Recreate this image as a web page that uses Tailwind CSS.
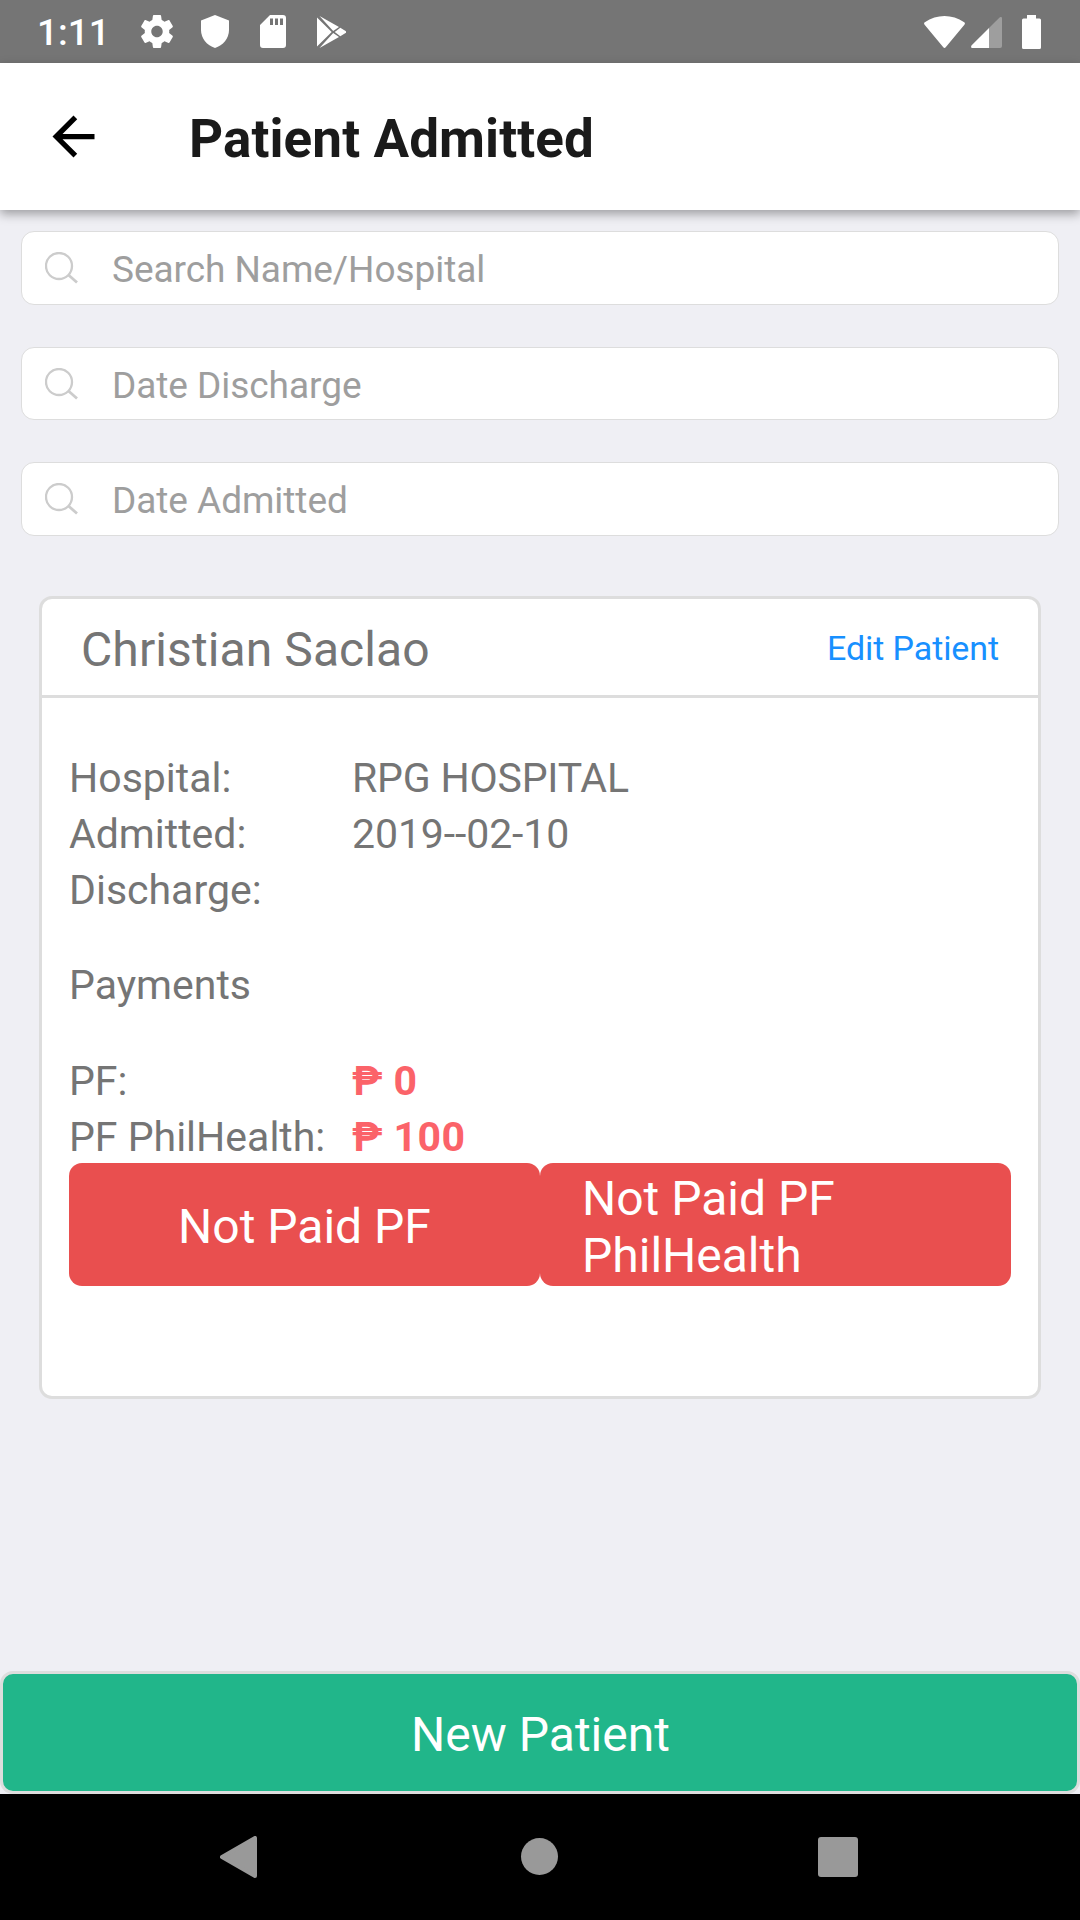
<!DOCTYPE html>
<html lang="en">
<head>
<meta charset="utf-8">
<title>Patient Admitted</title>
<script src="https://cdn.jsdelivr.net/npm/@tailwindcss/browser@4"></script>
</head>
<body class="font-[Roboto,sans-serif]">
<div class="flex h-[1920px] w-[1080px] flex-col overflow-hidden bg-[#efeff4] text-[#757575]">

  <!-- Status bar -->
  <div class="flex h-[63px] shrink-0 items-center justify-between bg-[#757575] pr-[39px] pl-[37px] text-white">
    <div class="flex items-center">
      <span class="w-[104px] pt-[3px] text-[37px] leading-[60px] font-medium">1:11</span>
      <svg class="mr-7 h-[33px] w-8" viewBox="2.2 2 19.6 20" preserveAspectRatio="none" fill="currentColor"><path d="M19.43 12.98c.04-.32.07-.64.07-.98s-.03-.66-.07-.98l2.11-1.65c.19-.15.24-.42.12-.64l-2-3.46c-.12-.22-.39-.3-.61-.22l-2.49 1c-.52-.4-1.08-.73-1.69-.98l-.38-2.65C14.46 2.18 14.25 2 14 2h-4c-.25 0-.46.18-.49.42l-.38 2.65c-.61.25-1.17.59-1.69.98l-2.49-1c-.23-.09-.49 0-.61.22l-2 3.46c-.13.22-.07.49.12.64l2.11 1.65c-.04.32-.07.65-.07.98s.03.66.07.98l-2.11 1.65c-.19.15-.24.42-.12.64l2 3.46c.12.22.39.3.61.22l2.49-1c.52.4 1.08.73 1.69.98l.38 2.65c.03.24.24.42.49.42h4c.25 0 .46-.18.49-.42l.38-2.65c.61-.25 1.17-.59 1.69-.98l2.49 1c.23.09.49 0 .61-.22l2-3.46c.12-.22.07-.49-.12-.64l-2.11-1.65zM12 15.5c-1.93 0-3.5-1.57-3.5-3.5s1.57-3.5 3.5-3.5 3.5 1.57 3.5 3.5-1.57 3.5-3.5 3.5z"/></svg>
      <svg class="mr-[31px] h-[33px] w-7" viewBox="0 0 28 33" fill="currentColor"><path d="M14 0 28 5.5V15c0 8.500-6 15.500-14 18C6 30.500 0 23.500 0 15V5.500z"/></svg>
      <svg class="mr-[31px] h-[33px] w-[26px]" viewBox="0 0 26 33" fill="currentColor"><path fill-rule="evenodd" d="M10 0h13a3 3 0 0 1 3 3v27a3 3 0 0 1-3 3H3a3 3 0 0 1-3-3V10zM10 3.500v6.500h3V3.500zM15 3.500v6.500h3V3.500zM20 3.500v6.500h3V3.500z"/></svg>
      <svg class="h-8 w-[29px]" viewBox="0 0 29 32" fill="currentColor"><path d="M0 1.500 14.700 16 0 30.500zM2.500 0 22 11l-5.800 4zM23.300 11.700 28.600 15a1.200 1.200 0 0 1 0 2l-5.300 3.300-5.600-4.300zM16.200 17 22 21 2.500 32z"/></svg>
    </div>
    <div class="flex items-center">
      <svg class="mr-1.5 h-8 w-[41px]" viewBox="0 0 41 32" fill="currentColor"><path d="M.6 8.700C-.2 7.800-.1 6.900.8 6.200 13 -2 28 -2 40.200 6.200c.9.700 1 1.600.2 2.500L21.700 31.200c-.7.900-1.700.9-2.400 0z"/></svg>
      <svg class="mr-5 mt-px h-[31px] w-[31px]" viewBox="0 0 31 31" fill="currentColor"><path fill-opacity=".3" d="M18 11 28.300.7C29.500-.4 31 0 31 1.500V29a2 2 0 0 1-2 2H18z"/><path d="M18 11v20H1.500C0 31-.4 29.500.7 28.300z"/></svg>
      <svg class="h-[34px] w-[19px]" viewBox="0 0 19 34" fill="currentColor"><path d="M5 0h9v3.500h3.500A1.500 1.500 0 0 1 19 5v27.500a1.500 1.500 0 0 1-1.500 1.500h-16A1.500 1.500 0 0 1 0 32.500V5a1.500 1.500 0 0 1 1.500-1.500H5z"/></svg>
    </div>
  </div>

  <!-- App bar -->
  <header class="flex h-[147px] shrink-0 items-center bg-white pl-[42px] shadow-[0_4px_10px_rgba(0,0,0,0.35)]">
    <svg class="h-[63px] w-[63px] text-black" viewBox="0 0 24 24" fill="currentColor"><path d="M20 11H7.830l5.590-5.590L12 4l-8 8 8 8 1.410-1.410L7.830 13H20v-2z"/></svg>
    <h1 class="ml-[84px] pt-[5px] text-[53px] leading-[60px] font-bold tracking-[0.1px] text-[#1a1a1a]">Patient Admitted</h1>
  </header>

  <!-- Filters -->
  <div class="flex shrink-0 flex-col gap-[42px] px-[21px] pt-[21px] text-[37px] leading-[44px] tracking-[-0.05px] text-[#9e9e9e]">
    <div class="flex h-[73.700px] items-center rounded-[13px] border border-[#ddd] bg-white pl-[23px]">
      <svg class="mr-[34px] h-8 w-[33px]" viewBox="0 0 33 32" fill="none" stroke="#ccc" stroke-width="2.300"><circle cx="14" cy="14" r="13"/><path d="m23.500 23 8.500 7.500" stroke-width="2.800"/></svg>
      <span class="pt-1">Search Name/Hospital</span>
    </div>
    <div class="flex h-[73.700px] items-center rounded-[13px] border border-[#ddd] bg-white pl-[23px]">
      <svg class="mr-[34px] h-8 w-[33px]" viewBox="0 0 33 32" fill="none" stroke="#ccc" stroke-width="2.300"><circle cx="14" cy="14" r="13"/><path d="m23.500 23 8.500 7.500" stroke-width="2.800"/></svg>
      <span class="pt-1">Date Discharge</span>
    </div>
    <div class="flex h-[73.700px] items-center rounded-[13px] border border-[#ddd] bg-white pl-[23px]">
      <svg class="mr-[34px] h-8 w-[33px]" viewBox="0 0 33 32" fill="none" stroke="#ccc" stroke-width="2.300"><circle cx="14" cy="14" r="13"/><path d="m23.500 23 8.500 7.500" stroke-width="2.800"/></svg>
      <span class="pt-[3px]">Date Admitted</span>
    </div>
  </div>

  <!-- Patient card -->
  <section class="mx-[39px] mt-[60px] h-[803px] shrink-0 rounded-[13px] border-[3px] border-[#ddd] bg-white">
    <div class="flex h-[99px] items-center justify-between border-b-[3px] border-[#ddd] px-[39px]">
      <h2 class="pt-[6px] text-[48px] leading-[56px] tracking-[0.1px]">Christian Saclao</h2>
      <a class="pt-px text-[34px] leading-[42px] tracking-[-0.1px] text-[#1890ff]">Edit Patient</a>
    </div>
    <div class="px-[27px] pt-[52px] text-[41px] leading-[56px]">
      <div class="grid grid-cols-[283px_1fr]">
        <span>Hospital:</span><span class="tracking-[-0.2px]">RPG HOSPITAL</span>
        <span>Admitted:</span><span class="tracking-[-0.1px]">2019--02-10</span>
        <span>Discharge:</span><span></span>
      </div>
      <p class="mt-[39px]">Payments</p>
      <div class="mt-10 grid h-[110px] grid-cols-[283px_1fr] grid-rows-[56px_56px] whitespace-nowrap">
        <span>PF:</span><span class="font-bold tracking-[0.4px] text-[#fb6369]">₱ 0</span>
        <span>PF PhilHealth:</span><span class="font-bold tracking-[0.4px] text-[#fb6369]">₱ 100</span>
      </div>
      <div class="grid h-[123px] grid-cols-2 text-[48px] leading-[57px] text-white">
        <div class="flex items-center justify-center rounded-[13px] bg-[#e94f4f] px-[41px] pt-[3px]">Not Paid PF</div>
        <div class="flex items-center rounded-[13px] bg-[#e94f4f] px-[42px] pt-[4px]">Not Paid PF PhilHealth</div>
      </div>
    </div>
  </section>

  <!-- Primary action -->
  <div class="mt-auto flex h-[123px] shrink-0 items-center justify-center rounded-[13px] border-[3px] border-[#ddd] bg-[#21b68a] pt-1 pl-px text-[48px] leading-[56px] text-white">New Patient</div>

  <!-- System navigation -->
  <nav class="flex h-[126px] shrink-0 items-center justify-between bg-black pr-[222px] pl-[220px] text-[#999]">
    <svg class="h-[42px] w-[37px]" viewBox="0 0 37 42" fill="currentColor" stroke="currentColor" stroke-width="4" stroke-linejoin="round"><path d="M2 21 35 2v38z"/></svg>
    <div class="mb-px ml-[3px] h-[37px] w-[37px] rounded-full bg-[#999]"></div>
    <div class="h-10 w-10 rounded-[3px] bg-[#999]"></div>
  </nav>
</div>
</body>
</html>
